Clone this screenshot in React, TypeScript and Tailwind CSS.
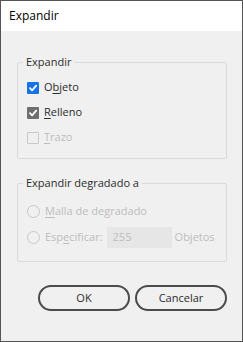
import React from "react";

const font = { fontFamily: '"Open Sans", "Noto Sans", sans-serif' };

function Check({ variant }: { variant: "blue" | "gray" | "off" }) {
  if (variant === "off") {
    return <span className="block w-[12px] h-[12px] border border-[#c8c8c8] rounded-[1px] bg-transparent" />;
  }
  return (
    <span
      className={
        "flex items-center justify-center w-[12px] h-[12px] rounded-[1px] " +
        (variant === "blue" ? "bg-[#1473e6]" : "bg-[#6e6e6e]")
      }
    >
      <svg width="10" height="10" viewBox="0 0 10 10">
        <path d="M2 5.2 L4.1 7.3 L8.2 2.6" fill="none" stroke="white" strokeWidth="1.8" strokeLinecap="round" strokeLinejoin="round" />
      </svg>
    </span>
  );
}

function Radio() {
  return <span className="block w-[13px] h-[13px] rounded-full border border-[#c8c8c8]" />;
}

export default function App() {
  return (
    <div style={font} className="w-[243px] h-[342px] border border-[#555555] bg-[#f0f0f0] flex flex-col text-[11px] text-[#2c2c2c]">
      <div className="h-[30px] bg-white flex items-center px-[8px] text-[12px] text-black">Expandir</div>
      <div className="pl-[16px] pt-[23px]">
        <fieldset className="w-[210px] border border-[#dadada] rounded-[2px] pl-[5px] pt-[5px] pb-[8px]">
          <legend className="px-[3px] leading-[16px] text-[#2c2c2c]">Expandir</legend>
          <div className="pl-[4px] flex flex-col">
            <div className="h-[25px] flex items-center gap-[5px]">
              <Check variant="blue" />
              <span>O<span className="underline underline-offset-2">b</span>jeto</span>
            </div>
            <div className="h-[25px] flex items-center gap-[5px]">
              <Check variant="gray" />
              <span><span className="underline underline-offset-2">R</span>elleno</span>
            </div>
            <div className="h-[25px] flex items-center gap-[5px] text-[#bdbdbd]">
              <Check variant="off" />
              <span><span className="underline underline-offset-2">T</span>razo</span>
            </div>
          </div>
        </fieldset>
        <fieldset className="mt-[16px] w-[210px] border border-[#dadada] rounded-[2px] pl-[5px] pt-[9px] pb-[13px]">
          <legend className="px-[3px] leading-[16px] text-[#2c2c2c]">Expandir degradado a</legend>
          <div className="pl-[4px] flex flex-col gap-[5px] text-[#bdbdbd]">
            <div className="h-[22px] flex items-center gap-[5px]">
              <Radio />
              <span><span className="underline underline-offset-2">M</span>alla de degradado</span>
            </div>
            <div className="h-[21px] flex items-center">
              <Radio />
              <span className="ml-[5px]">Esp<span className="underline underline-offset-2">e</span>cificar:</span>
              <div className="ml-[4px] w-[65px] h-[21px] bg-[#e6e6e6] flex items-center pl-[6px]">255</div>
              <span className="ml-[3px]">Objetos</span>
            </div>
          </div>
        </fieldset>
      </div>
      <div className="mt-[23px] pl-[37px] flex gap-[5px]">
        <button className="w-[92px] h-[26px] rounded-full border-2 border-[#4b4b4b] text-[#2c2c2c] text-[11px]">OK</button>
        <button className="w-[92px] h-[26px] rounded-full border-2 border-[#4b4b4b] text-[#2c2c2c] text-[11px]">Cancelar</button>
      </div>
    </div>
  );
}
